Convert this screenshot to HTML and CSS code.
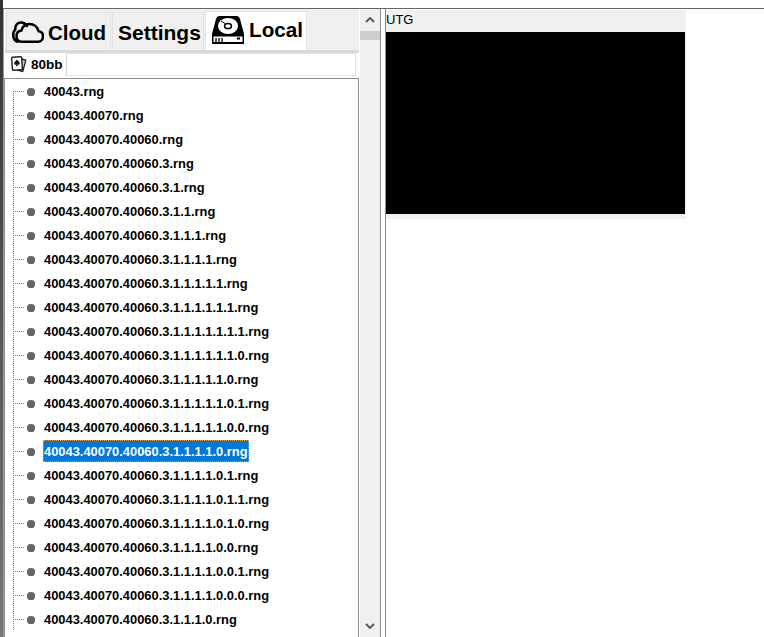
FILE: index.html
```html
<!DOCTYPE html>
<html lang="en">
<head>
<meta charset="utf-8">
<title>Ranges</title>
<link rel="stylesheet" href="styles.css">
</head>
<body>
<div class="app">
  <div class="edge"></div>
  <div class="window">
    <section class="left">
      <div class="content">
        <nav class="tabs">
          <div class="tab cloud">
            <svg class="cloud-icon" viewBox="0 0 32 22" width="32" height="22"><path d="M15 5C13.500 2.500 11 1.300 8.500 1.500 5 1.800 3 5 3.300 8.500 1.500 10 1.200 12 1.200 14 1.300 17.500 3 19.800 5.500 20.700M9.500 20.700H26C29 20.700 31 18.500 31 15.500 31 12.500 29 10.500 26.500 10.300 25.500 6 22 3 17.500 3 13.500 3 10.500 5.500 9.500 9.500 6 10 4.500 12.500 4.500 15 4.500 18.500 6.500 20.700 9.500 20.700Z" fill="none" stroke="#000" stroke-width="2.500" stroke-linejoin="round" stroke-linecap="round"/></svg>
            <span>Cloud</span>
          </div>
          <div class="tab settings"><span>Settings</span></div>
          <div class="tab local active">
            <svg class="drive-icon" viewBox="0 0 32 28" width="32" height="28"><path d="M7 0H25Q27 0 28 3L32 18V28H0V18L4 3Q5 0 7 0Z" fill="#000"/><ellipse cx="16" cy="10" rx="10" ry="8" fill="#fff"/><ellipse cx="16" cy="10" rx="3.500" ry="2.600" fill="none" stroke="#000" stroke-width="1.500"/><path d="M9 5l4 2.500" stroke="#000" stroke-width="1"/><rect x="1.500" y="20.500" width="29" height="5.500" fill="#fff"/><path d="M4 22v4M7 22v4M10 22v4" stroke="#000" stroke-width="1.300"/><rect x="25" y="21.500" width="3" height="2" fill="#000"/></svg>
            <span>Local</span>
          </div>
        </nav>
        <div class="stripe"></div>
        <div class="subtabs">
          <div class="subtab">
            <svg viewBox="0 0 16 17" width="16" height="17"><path d="M10.500 3l4.300 1.100-3 11.400-5.500-1.500" fill="#ccc" stroke="#222" stroke-width="1.300"/><rect x="1" y="1" width="10" height="13" rx="1" fill="#fff" stroke="#222" stroke-width="1.400" transform="rotate(-4 6 7)"/><path d="M6 3.500c1.500 2 3 2.800 2.700 4.300-.2 1.100-1.600 1.200-2.300.4l.5 2H5l.5-2c-.7.800-2.100.7-2.300-.4C3 6.300 4.500 5.500 6 3.500z" fill="#111"/></svg>
            <span>80bb</span>
          </div>
          <div class="subfill"></div>
        </div>
        <div class="tree">
          <div class="row first"><i class="dot"></i><span class="label">40043.rng</span></div>
          <div class="row"><i class="dot"></i><span class="label">40043.40070.rng</span></div>
          <div class="row"><i class="dot"></i><span class="label">40043.40070.40060.rng</span></div>
          <div class="row"><i class="dot"></i><span class="label">40043.40070.40060.3.rng</span></div>
          <div class="row"><i class="dot"></i><span class="label">40043.40070.40060.3.1.rng</span></div>
          <div class="row"><i class="dot"></i><span class="label">40043.40070.40060.3.1.1.rng</span></div>
          <div class="row"><i class="dot"></i><span class="label">40043.40070.40060.3.1.1.1.rng</span></div>
          <div class="row"><i class="dot"></i><span class="label">40043.40070.40060.3.1.1.1.1.rng</span></div>
          <div class="row"><i class="dot"></i><span class="label">40043.40070.40060.3.1.1.1.1.1.rng</span></div>
          <div class="row"><i class="dot"></i><span class="label">40043.40070.40060.3.1.1.1.1.1.1.rng</span></div>
          <div class="row"><i class="dot"></i><span class="label">40043.40070.40060.3.1.1.1.1.1.1.1.rng</span></div>
          <div class="row"><i class="dot"></i><span class="label">40043.40070.40060.3.1.1.1.1.1.1.0.rng</span></div>
          <div class="row"><i class="dot"></i><span class="label">40043.40070.40060.3.1.1.1.1.1.0.rng</span></div>
          <div class="row"><i class="dot"></i><span class="label">40043.40070.40060.3.1.1.1.1.1.0.1.rng</span></div>
          <div class="row"><i class="dot"></i><span class="label">40043.40070.40060.3.1.1.1.1.1.0.0.rng</span></div>
          <div class="row"><i class="dot"></i><span class="label selected">40043.40070.40060.3.1.1.1.1.0.rng</span></div>
          <div class="row"><i class="dot"></i><span class="label">40043.40070.40060.3.1.1.1.1.0.1.rng</span></div>
          <div class="row"><i class="dot"></i><span class="label">40043.40070.40060.3.1.1.1.1.0.1.1.rng</span></div>
          <div class="row"><i class="dot"></i><span class="label">40043.40070.40060.3.1.1.1.1.0.1.0.rng</span></div>
          <div class="row"><i class="dot"></i><span class="label">40043.40070.40060.3.1.1.1.1.0.0.rng</span></div>
          <div class="row"><i class="dot"></i><span class="label">40043.40070.40060.3.1.1.1.1.0.0.1.rng</span></div>
          <div class="row"><i class="dot"></i><span class="label">40043.40070.40060.3.1.1.1.1.0.0.0.rng</span></div>
          <div class="row"><i class="dot"></i><span class="label">40043.40070.40060.3.1.1.1.0.rng</span></div>
        </div>
      </div>
      <div class="scrollbar">
        <svg class="arrow" viewBox="0 0 10 6" width="10" height="6"><path d="M1 5l4-4 4 4" fill="none" stroke="#555" stroke-width="1.800"/></svg>
        <div class="thumb"></div>
        <div class="track"></div>
        <svg class="arrow" viewBox="0 0 10 6" width="10" height="6"><path d="M1 1l4 4 4-4" fill="none" stroke="#555" stroke-width="1.800"/></svg>
      </div>
    </section>
    <section class="right">
      <div class="panel">
        <div class="panel-title">UTG</div>
        <div class="panel-body"></div>
      </div>
    </section>
  </div>
</div>
</body>
</html>
```
FILE: styles.css
```css
* { box-sizing: border-box; }
html, body { margin: 0; padding: 0; }
body { width: 764px; height: 637px; overflow: hidden; background: #fff; font-family: "Liberation Sans", Arial, sans-serif; color: #000; }
.app { display: flex; height: 637px; }
.edge { width: 3px; flex: none; background: linear-gradient(to bottom, #333, #777); }
.window { flex: 1; margin-top: 8px; border-top: 1px solid #666; display: flex; min-width: 0; }
.left { width: 378px; flex: none; display: flex; border-left: 1px solid #9a9a9a; border-right: 1px solid #8e8e8e; }
.content { width: 355px; flex: none; display: flex; flex-direction: column; }
.tabs { height: 41px; flex: none; display: flex; align-items: stretch; padding: 3px 0 0 1px; background: #f0f0f0; border-left: 1px solid #fff; }
.tab { display: flex; align-items: center; font-size: 20.500px; font-weight: 700; background: #f0f0f0; border: 1px solid #e3e3e3; border-bottom: 0; margin-right: 1px; }
.cloud { width: 105px; padding: 2px 0 0 5px; gap: 4px; }
.cloud-icon { margin-top: -2px; }
.settings { width: 92px; padding: 2px 0 0 5px; font-size: 21px; }
.local { width: 102px; padding: 0 0 0 6px; gap: 5px; height: 39px; margin-top: -1px; background: #fff; }
.local span { margin-top: -2px; font-size: 20.700px; }
.local svg { margin-top: -3px; }
.stripe { height: 3px; flex: none; margin-left: 1px; background: #d9d9d9; }
.subtabs { height: 23px; flex: none; display: flex; }
.subtab { width: 63px; flex: none; display: flex; align-items: center; gap: 4px; padding-left: 7px; font-size: 13.500px; font-weight: 700; background: #fff; border-right: 1px solid #d9d9d9; }
.subfill { width: 289px; flex: none; background: #fff; border: 1px solid #e4e4e4; border-left: 0; }
.tree { flex: 1; min-height: 0; overflow: hidden; margin-top: 2px; border: 1px solid #8f8f8f; border-bottom: 0; background: #fff; }
.row { height: 24px; display: flex; align-items: center; padding-left: 22px; font-size: 12.900px; font-weight: 700; background-image: repeating-linear-gradient(to bottom, #808080 0 1px, transparent 1px 2px), repeating-linear-gradient(to right, #808080 0 1px, transparent 1px 2px); background-size: 1px 100%, 11px 1px; background-position: 8px 0, 8px 12px; background-repeat: no-repeat; }
.row.first { background-size: 1px 12px, 11px 1px; background-position: 8px 12px, 8px 12px; }
.dot { width: 8px; height: 8px; flex: none; border-radius: 45%; background: #666; margin: 1px 8px 0 0; }
.label { display: flex; align-items: center; height: 22px; padding: 0 1px; white-space: nowrap; }
.selected { background: #0078d7; color: #fff; outline: 1px dotted #e0a040; outline-offset: -1px; }
.scrollbar { flex: 1; margin-left: 1px; display: flex; flex-direction: column; align-items: center; background: #f0f0f0; padding: 8px 0 8px; }
.arrow { flex: none; }
.thumb { width: 100%; height: 9px; flex: none; margin-top: 8px; background: #cdcdcd; }
.track { flex: 1; }
.right { flex: 1; margin-left: 4px; padding-top: 1px; border-left: 1px solid #8e8e8e; }
.panel { width: 300px; background: #f0f0f0; padding: 0 1px 5px 0; }
.panel-title { height: 22px; font-size: 13px; line-height: 19px; }
.panel-body { height: 182px; background: #000; }
```
